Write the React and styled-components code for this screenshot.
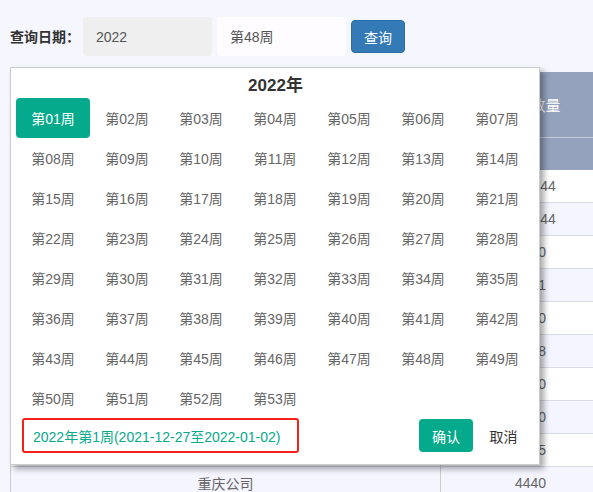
import React, { useState } from 'react';
import styled, { createGlobalStyle } from 'styled-components';

const GlobalStyle = createGlobalStyle`
  html, body {
    margin: 0;
    padding: 0;
    background: #f5f6fe;
    overflow: hidden;
  }
  body {
    font-family: "Liberation Sans", "Noto Sans CJK SC", sans-serif;
    font-size: 14px;
    color: #555;
  }
`;

const Page = styled.div`
  position: relative;
  width: 593px;
  height: 492px;
  overflow: hidden;
  box-sizing: border-box;
  padding: 17px 0 0 10px;
`;

const Toolbar = styled.div`
  display: flex;
  align-items: center;
  height: 39px;
`;

const Label = styled.span`
  font-weight: bold;
  color: #333;
  font-size: 14px;
  line-height: 20px;
  margin-right: 3px;
`;

const Field = styled.div`
  width: 129px;
  height: 39px;
  box-sizing: border-box;
  padding-left: 13px;
  display: flex;
  align-items: center;
  border-radius: 4px;
  background: ${(p) => (p.$readonly ? '#efefef' : '#fffcff')};
  color: #555;
  margin-right: 5px;
  line-height: 20px;
`;

const QueryButton = styled.button`
  width: 54px;
  height: 33px;
  border: 1px solid #2e6da4;
  border-radius: 4px;
  background: #337ab7;
  color: #fff;
  font: inherit;
  font-size: 14px;
  padding: 0;
`;

const Content = styled.div`
  position: relative;
  margin-top: 11px;
  padding-top: 5px;
`;

const Table = styled.div`
  width: 609px;
  border-left: 1px solid #ccc;
`;

const HeadRow = styled.div`
  display: grid;
  grid-template-columns: 430px 1fr;
  height: ${(p) => (p.$tall ? '66px' : '32px')};
  background: #94a2bd;
  border-bottom: 1px solid ${(p) => (p.$tall ? '#c6cbd6' : '#94a2bd')};
  box-sizing: border-box;
  color: #fff;
  font-size: 15px;
`;

const Row = styled.div`
  display: grid;
  grid-template-columns: 430px 1fr;
  height: 33px;
  box-sizing: border-box;
  border-bottom: 1px solid #d9dbe3;
  background: ${(p) => (p.$alt ? '#f4f5fe' : '#fff')};
  color: #666;
`;

const Cell = styled.div`
  display: flex;
  align-items: center;
  justify-content: center;
  border-right: ${(p) => (p.$divider ? '1px solid #ccc' : 'none')};
`;

const Arrow = styled.svg`
  position: absolute;
  left: 0;
  top: 200px;
`;

const Popup = styled.div`
  position: absolute;
  top: 0;
  left: 0;
  width: 530px;
  box-sizing: border-box;
  background: #fff;
  border: 1px solid #ccc;
  box-shadow: 4px 4px 6px rgba(0, 0, 0, 0.35);
  padding: 0 5px 11px 5px;
`;

const Title = styled.div`
  height: 30px;
  display: flex;
  align-items: center;
  justify-content: center;
  font-size: 17px;
  font-weight: bold;
  color: #333;
  padding-left: 1px;
`;

const WeekGrid = styled.div`
  display: grid;
  grid-template-columns: repeat(7, 74px);
  grid-auto-rows: 40px;
`;

const Week = styled.div`
  display: flex;
  align-items: center;
  justify-content: center;
  border-radius: 4px;
  font-size: 14px;
  color: ${(p) => (p.$active ? '#fff' : '#666')};
  background: ${(p) => (p.$active ? '#05a98b' : 'transparent')};
  cursor: pointer;
`;

const Footer = styled.div`
  display: flex;
  align-items: center;
  height: 35px;
  padding-left: 6px;
`;

const Summary = styled.div`
  width: 277px;
  height: 35px;
  box-sizing: border-box;
  border: 2px solid #f5201a;
  border-radius: 3px;
  padding-left: 9px;
  display: flex;
  align-items: center;
  color: #05a98b;
  font-size: 14px;
`;

const ActionButton = styled.button`
  height: 33px;
  width: ${(p) => (p.$primary ? '54px' : '61px')};
  margin-left: ${(p) => (p.$primary ? 'auto' : '0')};
  border: none;
  border-radius: 4px;
  padding: 0;
  font: inherit;
  font-size: 14px;
  background: ${(p) => (p.$primary ? '#05a98b' : 'transparent')};
  color: ${(p) => (p.$primary ? '#fff' : '#333')};
`;

const rows = [
  ['北京公司', '4444.44'],
  ['上海公司', '4444.44'],
  ['广州公司', '4440'],
  ['深圳公司', '4441'],
  ['杭州公司', '4440'],
  ['南京公司', '4448'],
  ['武汉公司', '4440'],
  ['成都公司', '4440'],
  ['西安公司', '4445'],
  ['重庆公司', '4440'],
];

const weeks = Array.from({ length: 53 }, (_, i) => String(i + 1).padStart(2, '0'));

const App = () => {
  const [selected, setSelected] = useState('01');

  return (
    <Page>
      <GlobalStyle />
      <Toolbar>
        <Label>查询日期：</Label>
        <Field $readonly>2022</Field>
        <Field>第48周</Field>
        <QueryButton>查询</QueryButton>
      </Toolbar>
      <Content>
        <Table>
          <HeadRow $tall>
            <Cell>公司</Cell>
            <Cell>销售数量</Cell>
          </HeadRow>
          <HeadRow>
            <Cell />
            <Cell />
          </HeadRow>
          {rows.map(([name, value], i) => (
            <Row key={name} $alt={i % 2 === 1}>
              <Cell $divider>{name}</Cell>
              <Cell>{value}</Cell>
            </Row>
          ))}
        </Table>
        <Arrow width="15" height="24" viewBox="0 0 15 24">
          <path d="M1 2 L7 12 L1 22 M7 2 L13 12 L7 22" fill="none" stroke="#c9cace" strokeWidth="2" />
        </Arrow>
        <Popup>
          <Title>2022年</Title>
          <WeekGrid>
            {weeks.map((w) => (
              <Week key={w} $active={w === selected} onClick={() => setSelected(w)}>
                第{w}周
              </Week>
            ))}
          </WeekGrid>
          <Footer>
            <Summary>2022年第1周(2021-12-27至2022-01-02)</Summary>
            <ActionButton $primary>确认</ActionButton>
            <ActionButton>取消</ActionButton>
          </Footer>
        </Popup>
      </Content>
    </Page>
  );
};

export default App;
